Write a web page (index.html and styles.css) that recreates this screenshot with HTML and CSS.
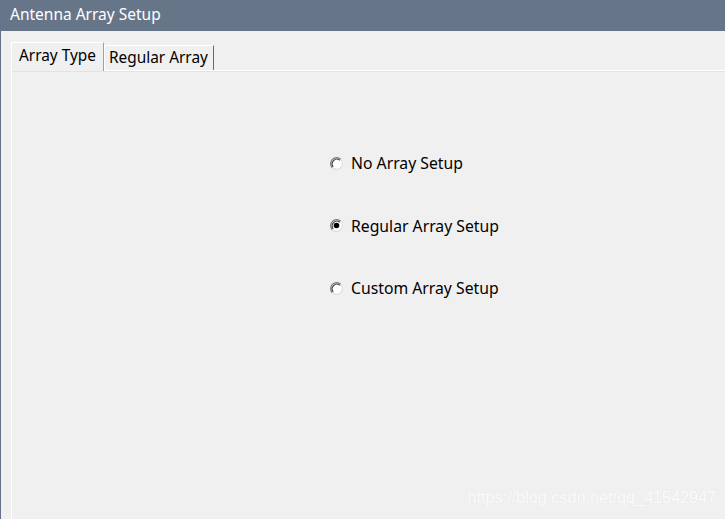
FILE: index.html
```html
<!DOCTYPE html>
<html>
<head>
<meta charset="utf-8">
<link rel="stylesheet" href="styles.css">
</head>
<body>
<div class="window">
  <div class="titlebar">Antenna Array Setup</div>
  <div class="client">
    <div class="tabs">
      <div class="tab active">Array Type</div>
      <div class="tab">Regular Array</div>
    </div>
    <div class="panel">
      <div class="options">
        <label class="option">
          <svg class="radio" width="13" height="13" viewBox="0 0 13 13"><circle cx="6.5" cy="6.5" r="6" fill="#fff"/><path d="M2.26 10.74 A6 6 0 0 1 10.74 2.26" fill="none" stroke="#7c7c7c" stroke-width="1.3"/><path d="M3.2 9.8 A4.7 4.7 0 0 1 9.8 3.2" fill="none" stroke="#3a3a3a" stroke-width="1.1"/><path d="M10.74 2.26 A6 6 0 0 1 2.26 10.74" fill="none" stroke="#dcdcdc" stroke-width="1.1"/></svg>
          <span>No Array Setup</span>
        </label>
        <label class="option">
          <svg class="radio" width="13" height="13" viewBox="0 0 13 13"><circle cx="6.5" cy="6.5" r="6" fill="#fff"/><path d="M2.26 10.74 A6 6 0 0 1 10.74 2.26" fill="none" stroke="#7c7c7c" stroke-width="1.3"/><path d="M3.2 9.8 A4.7 4.7 0 0 1 9.8 3.2" fill="none" stroke="#3a3a3a" stroke-width="1.1"/><path d="M10.74 2.26 A6 6 0 0 1 2.26 10.74" fill="none" stroke="#dcdcdc" stroke-width="1.1"/><circle cx="6.5" cy="6.5" r="2.8" fill="#000"/></svg>
          <span>Regular Array Setup</span>
        </label>
        <label class="option">
          <svg class="radio" width="13" height="13" viewBox="0 0 13 13"><circle cx="6.5" cy="6.5" r="6" fill="#fff"/><path d="M2.26 10.74 A6 6 0 0 1 10.74 2.26" fill="none" stroke="#7c7c7c" stroke-width="1.3"/><path d="M3.2 9.8 A4.7 4.7 0 0 1 9.8 3.2" fill="none" stroke="#3a3a3a" stroke-width="1.1"/><path d="M10.74 2.26 A6 6 0 0 1 2.26 10.74" fill="none" stroke="#dcdcdc" stroke-width="1.1"/></svg>
          <span>Custom Array Setup</span>
        </label>
      </div>
    </div>
    <div class="watermark">https://blog.csdn.net/qq_41542947</div>
  </div>
</div>
</body>
</html>
```
FILE: styles.css
```css
html, body {
  margin: 0;
  padding: 0;
  width: 725px;
  height: 519px;
  overflow: hidden;
  background: #f0f0f0;
}
.window {
  width: 725px;
  height: 519px;
  display: flex;
  flex-direction: column;
  font-family: "Noto Sans", "Open Sans", sans-serif;
  color: #000;
  box-sizing: border-box;
  border-left: 1px solid #657388;
}
.titlebar {
  height: 31px;
  background: #677589;
  color: #fff;
  font-size: 15.5px;
  line-height: 28px;
  padding-left: 9px;
  flex: none;
}
.client {
  flex: 1;
  position: relative;
  padding: 11px 0 0 10px;
  display: flex;
  flex-direction: column;
  background: #f0f0f0;
}
.tabs {
  display: flex;
  align-items: flex-end;
  height: 28px;
  flex: none;
}
.tab {
  font-size: 15.4px;
  height: 25px;
  line-height: 24px;
  padding: 0 5px 0 4px;
  border-top: 1px solid #fff;
  border-left: 1px solid #fff;
  border-right: 1px solid #696969;
  box-sizing: border-box;
  background: #f0f0f0;
}
.tab.active {
  height: 29px;
  line-height: 25px;
  padding: 0 7px 0 7px;
  margin-bottom: -1px;
  position: relative;
  z-index: 1;
  border-right: 1px solid #a0a0a0;
}
.panel {
  flex: 1;
  border-top: 1px solid #fff;
  border-left: 1px solid #fff;
  box-shadow: inset 0 1px 0 #e3e3e3;
}
.options {
  margin: 81px 0 0 318px;
  display: flex;
  flex-direction: column;
  gap: 40px;
}
.option {
  display: flex;
  align-items: center;
  gap: 8px;
  font-size: 15.75px;
  height: 22.5px;
}
.radio {
  flex: none;
}
.watermark {
  position: absolute;
  right: 9px;
  bottom: 12px;
  font-family: "Liberation Sans", Arial, sans-serif;
  font-size: 16.2px;
  color: #fbfbfb;
  text-shadow: 0 0 1px #e2e2e2;
}
```
